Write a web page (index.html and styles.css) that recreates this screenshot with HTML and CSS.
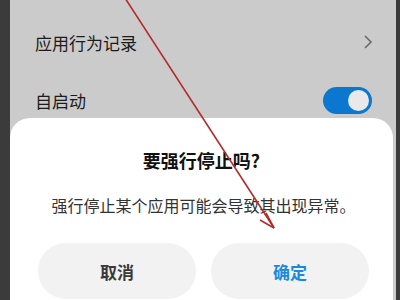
FILE: index.html
```html
<!DOCTYPE html>
<html lang="zh-CN">
<head>
<meta charset="utf-8">
<link rel="stylesheet" href="styles.css">
</head>
<body>
<div class="screen">
  <ul class="list">
    <li class="row"><span class="label faded">权限管理</span></li>
    <li class="row"><span class="label">应用行为记录</span>
      <svg class="chev" width="10" height="16" viewBox="0 0 10 16"><path d="M2 2 L8 8 L2 14" fill="none" stroke="#6a6a6a" stroke-width="1.6"/></svg>
    </li>
    <li class="row"><span class="label">自启动</span>
      <span class="toggle"><span class="knob"></span></span>
    </li>
  </ul>
  <div class="dialog">
    <div class="title">要强行停止吗?</div>
    <div class="msg">强行停止某个应用可能会导致其出现异常。</div>
    <div class="buttons">
      <div class="btn cancel">取消</div>
      <div class="btn ok">确定</div>
    </div>
  </div>
</div>
<svg class="arrow" width="400" height="300" viewBox="0 0 400 300">
  <line x1="125" y1="-2" x2="274" y2="228" stroke="#b52a2a" stroke-width="1.6"/>
  <line x1="274" y1="228" x2="266" y2="213" stroke="#b52a2a" stroke-width="1.6"/>
  <line x1="274" y1="228" x2="260" y2="220" stroke="#b52a2a" stroke-width="1.6"/>
</svg>
</body>
</html>
```
FILE: styles.css
```css
html, body {
  margin: 0;
  padding: 0;
}
body {
  width: 400px;
  height: 300px;
  background: #3b3b3b;
  overflow: hidden;
  position: relative;
  font-family: "Noto Sans CJK SC", "Noto Sans", sans-serif;
}
.screen {
  position: relative;
  margin-left: 10px;
  width: 386px;
  height: 300px;
  background: #cbcbcb;
  overflow: hidden;
}
.list {
  list-style: none;
  margin: -45px 0 0 0;
  padding: 0 24px 0 25px;
}
.row {
  height: 58px;
  display: flex;
  align-items: center;
  justify-content: space-between;
}
.label {
  font-size: 17px;
  color: #1c1c1c;
}
.faded {
  color: #777;
}
.chev {
  margin-right: -1px;
}
.toggle {
  width: 49px;
  height: 27px;
  border-radius: 14px;
  background: #0c77cf;
  display: flex;
  align-items: center;
  justify-content: flex-end;
  padding-right: 3px;
  box-sizing: border-box;
  margin-right: 0;
}
.knob {
  width: 21px;
  height: 21px;
  border-radius: 50%;
  background: #e9e9e9;
}
.dialog {
  position: absolute;
  left: 0;
  top: 118px;
  width: 383px;
  height: 200px;
  background: #ffffff;
  border-radius: 20px 20px 0 0;
  display: flex;
  flex-direction: column;
  align-items: center;
}
.title {
  margin-top: 28px;
  font-size: 18px;
  font-weight: 700;
  color: #111;
  line-height: 28px;
}
.msg {
  margin-top: 19px;
  font-size: 16px;
  color: #333;
  line-height: 24px;
  padding-left: 4px;
}
.buttons {
  margin-top: 26px;
  display: flex;
  gap: 15px;
  padding-left: 4px;
}
.btn {
  width: 158px;
  height: 56px;
  border-radius: 28px;
  background: #f2f2f2;
  display: flex;
  align-items: center;
  justify-content: center;
  font-size: 17px;
  font-weight: 700;
}
.cancel {
  color: #3a3a3a;
}
.ok {
  color: #1a8ae0;
}
.arrow {
  position: absolute;
  left: 0;
  top: 0;
}
```
